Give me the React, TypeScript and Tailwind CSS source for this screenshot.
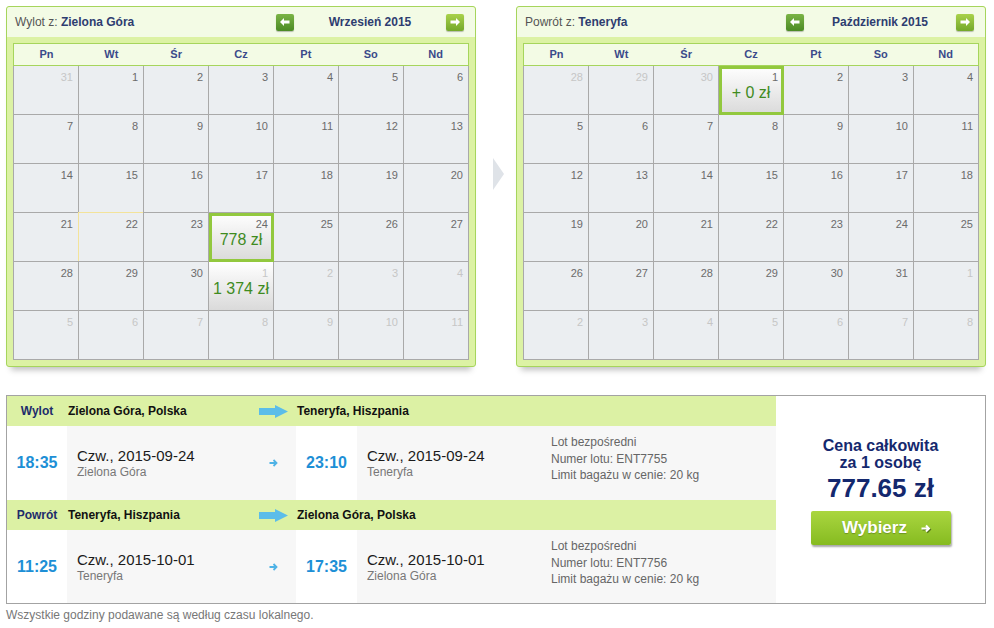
import clsx from 'clsx';

type Day = {
  n: number;
  out?: boolean;
  price?: string;
  selected?: boolean;
  shaded?: boolean;
  hover?: boolean;
};

const range = (a: number, b: number, out = false): Day[] =>
  Array.from({ length: b - a + 1 }, (_, i) => ({ n: a + i, out }));

// September 2015, Monday first
const september: Day[] = [...range(31, 31, true), ...range(1, 30), ...range(1, 11, true)];
september[22] = { ...september[22], hover: true };
september[24] = { ...september[24], selected: true, price: '778 zł' };
september[31] = { ...september[31], shaded: true, price: '1 374 zł' };

// October 2015
const october: Day[] = [...range(28, 30, true), ...range(1, 31), ...range(1, 8, true)];
october[3] = { ...october[3], selected: true, price: '+ 0 zł' };

const weekDays = ['Pn', 'Wt', 'Śr', 'Cz', 'Pt', 'So', 'Nd'];

function NavButton({ dir }: { dir: 'left' | 'right' }) {
  return (
    <button
      className={clsx(
        'flex h-[17px] w-[18px] items-center justify-center rounded-[2px] shadow-[0_1px_1px_rgba(0,0,0,0.25)]',
        dir === 'left'
          ? 'bg-gradient-to-b from-[#7ab445] to-[#4b8a24]'
          : 'bg-gradient-to-b from-[#a9d24a] to-[#74a82a]'
      )}
    >
      <svg width="10" height="8" viewBox="0 0 10 8">
        {dir === 'left' ? (
          <path d="M0 4 L4 0 V2.5 H9.5 V5.5 H4 V8 Z" fill="#fff" />
        ) : (
          <path d="M10 4 L6 0 V2.5 H0.5 V5.5 H6 V8 Z" fill="#fff" />
        )}
      </svg>
    </button>
  );
}

function Cell({ d }: { d: Day }) {
  return (
    <div
      className={clsx(
        'relative h-[49px] border-r border-b border-[#a9a9a9] pt-[5px]',
        d.selected || d.shaded ? 'bg-gradient-to-b from-white to-[#dadada]' : 'bg-[#ebeef1]'
      )}
    >
      <div
        className={clsx(
          'pr-[5px] text-right text-[11px] leading-[13px]',
          d.out ? 'text-[#c6c6c6]' : 'text-[#6b6b6b]'
        )}
      >
        {d.n}
      </div>
      {d.price && (
        <div className="text-center text-[16px] leading-[18px] text-[#3f8b1f]">{d.price}</div>
      )}
      {d.selected && (
        <div className="absolute top-0 left-0 -right-px -bottom-px z-10 border-[3px] border-[#92c83e]" />
      )}
      {d.hover && (
        <div className="absolute -top-px -left-px right-0 bottom-0 z-10 border-t border-l border-[#f3e39a]" />
      )}
    </div>
  );
}

function CalendarPanel({
  label,
  city,
  month,
  days,
}: {
  label: string;
  city: string;
  month: string;
  days: Day[];
}) {
  return (
    <div className="w-[470px] rounded-[3px] border border-[#a6d55c] bg-[#dcf2a4] shadow-[0_8px_6px_-5px_rgba(0,0,0,0.25)]">
      <div className="flex h-[30px] items-center rounded-t-[3px] bg-[#f3fbe5] pr-[11px] pl-[8px] text-[12px]">
        <div className="flex-1">
          <span className="text-[#555]">{label} </span>
          <span className="font-bold text-[#2e3d70]">{city}</span>
        </div>
        <NavButton dir="left" />
        <div className="w-[152px] text-center font-bold text-[#2e3d70]">{month}</div>
        <NavButton dir="right" />
      </div>
      <div className="px-[6px] pt-[6px] pb-[6px]">
        <div className="grid h-[23px] grid-cols-7 items-center border border-[#a6d55c] bg-[#f3fbe5] text-[11px] font-bold text-[#3a4a8a]">
          {weekDays.map((w) => (
            <div key={w} className="text-center">
              {w}
            </div>
          ))}
        </div>
        <div className="grid w-[456px] grid-cols-[repeat(7,65px)] border-l border-[#a9a9a9]">
          {days.map((d, i) => (
            <Cell key={i} d={d} />
          ))}
        </div>
      </div>
    </div>
  );
}

function BigArrow() {
  return (
    <svg width="29" height="13" viewBox="0 0 29 13">
      <path d="M0 3 H16 V0 L29 6.5 L16 13 V10 H0 Z" fill="#5bbde9" />
    </svg>
  );
}

function SmallArrow() {
  return (
    <svg width="9" height="8" viewBox="0 0 9 8">
      <path d="M0.5 4 H7.5 M4.5 1 L7.5 4 L4.5 7" stroke="#4fb3e6" strokeWidth="1.8" fill="none" />
    </svg>
  );
}

function Place({ date, city }: { date: string; city: string }) {
  return (
    <div>
      <div className="text-[15px] leading-[17px] text-[#1b1b1b]">{date}</div>
      <div className="mt-px text-[12px] leading-[14px] text-[#777]">{city}</div>
    </div>
  );
}

type Leg = {
  label: string;
  from: string;
  to: string;
  dep: string;
  arr: string;
  date: string;
  fromCity: string;
  toCity: string;
  flight: string;
  height: string;
};

const legs: Leg[] = [
  {
    label: 'Wylot',
    from: 'Zielona Góra, Polska',
    to: 'Teneryfa, Hiszpania',
    dep: '18:35',
    arr: '23:10',
    date: 'Czw., 2015-09-24',
    fromCity: 'Zielona Góra',
    toCity: 'Teneryfa',
    flight: 'ENT7755',
    height: 'h-[74px]',
  },
  {
    label: 'Powrót',
    from: 'Teneryfa, Hiszpania',
    to: 'Zielona Góra, Polska',
    dep: '11:25',
    arr: '17:35',
    date: 'Czw., 2015-10-01',
    fromCity: 'Teneryfa',
    toCity: 'Zielona Góra',
    flight: 'ENT7756',
    height: 'h-[73px]',
  },
];

function LegRows({ leg }: { leg: Leg }) {
  return (
    <>
      <div className="flex h-[30px] items-center bg-[#dcf1a4] text-[12px] font-bold">
        <div className="w-[60px] text-center text-[#1e2c6b]">{leg.label}</div>
        <div className="flex w-[229px] items-center justify-between pr-[8px] pl-px text-[#111]">
          {leg.from}
          <BigArrow />
        </div>
        <div className="pl-px text-[#111]">{leg.to}</div>
      </div>
      <div className={clsx('flex', leg.height)}>
        <div className="flex w-[60px] items-center justify-center bg-white text-[16px] font-bold text-[#1d8fd6]">
          {leg.dep}
        </div>
        <div className="flex w-[229px] items-center justify-between bg-[#f7f7f7] pr-[18px] pl-[10px]">
          <Place date={leg.date} city={leg.fromCity} />
          <SmallArrow />
        </div>
        <div className="flex w-[61px] items-center justify-center bg-white text-[16px] font-bold text-[#1d8fd6]">
          {leg.arr}
        </div>
        <div className="flex flex-1 bg-[#f7f7f7]">
          <div className="flex w-[194px] items-center pl-[10px]">
            <Place date={leg.date} city={leg.toCity} />
          </div>
          <div className="pt-[8px] text-[12px] leading-[16.5px] text-[#666]">
            <div>Lot bezpośredni</div>
            <div>Numer lotu: {leg.flight}</div>
            <div>Limit bagażu w cenie: 20 kg</div>
          </div>
        </div>
      </div>
    </>
  );
}

export default function App() {
  return (
    <div className="h-[628px] w-[994px] overflow-hidden bg-white pt-[6px] pl-[6px] font-['Liberation_Sans',Arial,sans-serif]">
      <div className="flex">
        <CalendarPanel label="Wylot z:" city="Zielona Góra" month="Wrzesień 2015" days={september} />
        <div className="w-[40px] pt-[152px] pl-[17px]">
          <div className="h-0 w-0 border-y-[16px] border-l-[11px] border-y-transparent border-l-[#dfe3e8]" />
        </div>
        <CalendarPanel label="Powrót z:" city="Teneryfa" month="Październik 2015" days={october} />
      </div>

      <div className="mt-[28px] flex w-[980px] border border-[#a3a3a3]">
        <div className="w-[769px]">
          {legs.map((leg) => (
            <LegRows key={leg.label} leg={leg} />
          ))}
        </div>
        <div className="flex flex-1 flex-col items-center bg-white pt-[41px] text-[#14286e]">
          <div className="text-center text-[16px] leading-[17px] font-bold">
            Cena całkowita
            <br />
            za 1 osobę
          </div>
          <div className="mt-[2px] text-[26px] leading-[30px] font-bold">777.65 zł</div>
          <button className="mt-[8px] flex h-[34px] w-[140px] items-center justify-center gap-[14px] rounded-[2px] bg-gradient-to-b from-[#aad63f] to-[#86bb1f] pl-[12px] text-[17px] font-bold text-white shadow-[1px_2px_2px_rgba(0,0,0,0.35)]">
            <span className="[text-shadow:0_1px_1px_rgba(0,0,0,0.25)]">Wybierz</span>
            <svg width="10" height="9" viewBox="0 0 10 9" className="drop-shadow-[1px_1px_0_rgba(40,60,10,0.6)]">
              <path d="M0.5 4.5 H8 M5 1.5 L8 4.5 L5 7.5" stroke="#fff" strokeWidth="2" fill="none" />
            </svg>
          </button>
        </div>
      </div>

      <div className="mt-[4px] text-[12px] leading-[14px] text-[#777]">
        Wszystkie godziny podawane są według czasu lokalnego.
      </div>
    </div>
  );
}
